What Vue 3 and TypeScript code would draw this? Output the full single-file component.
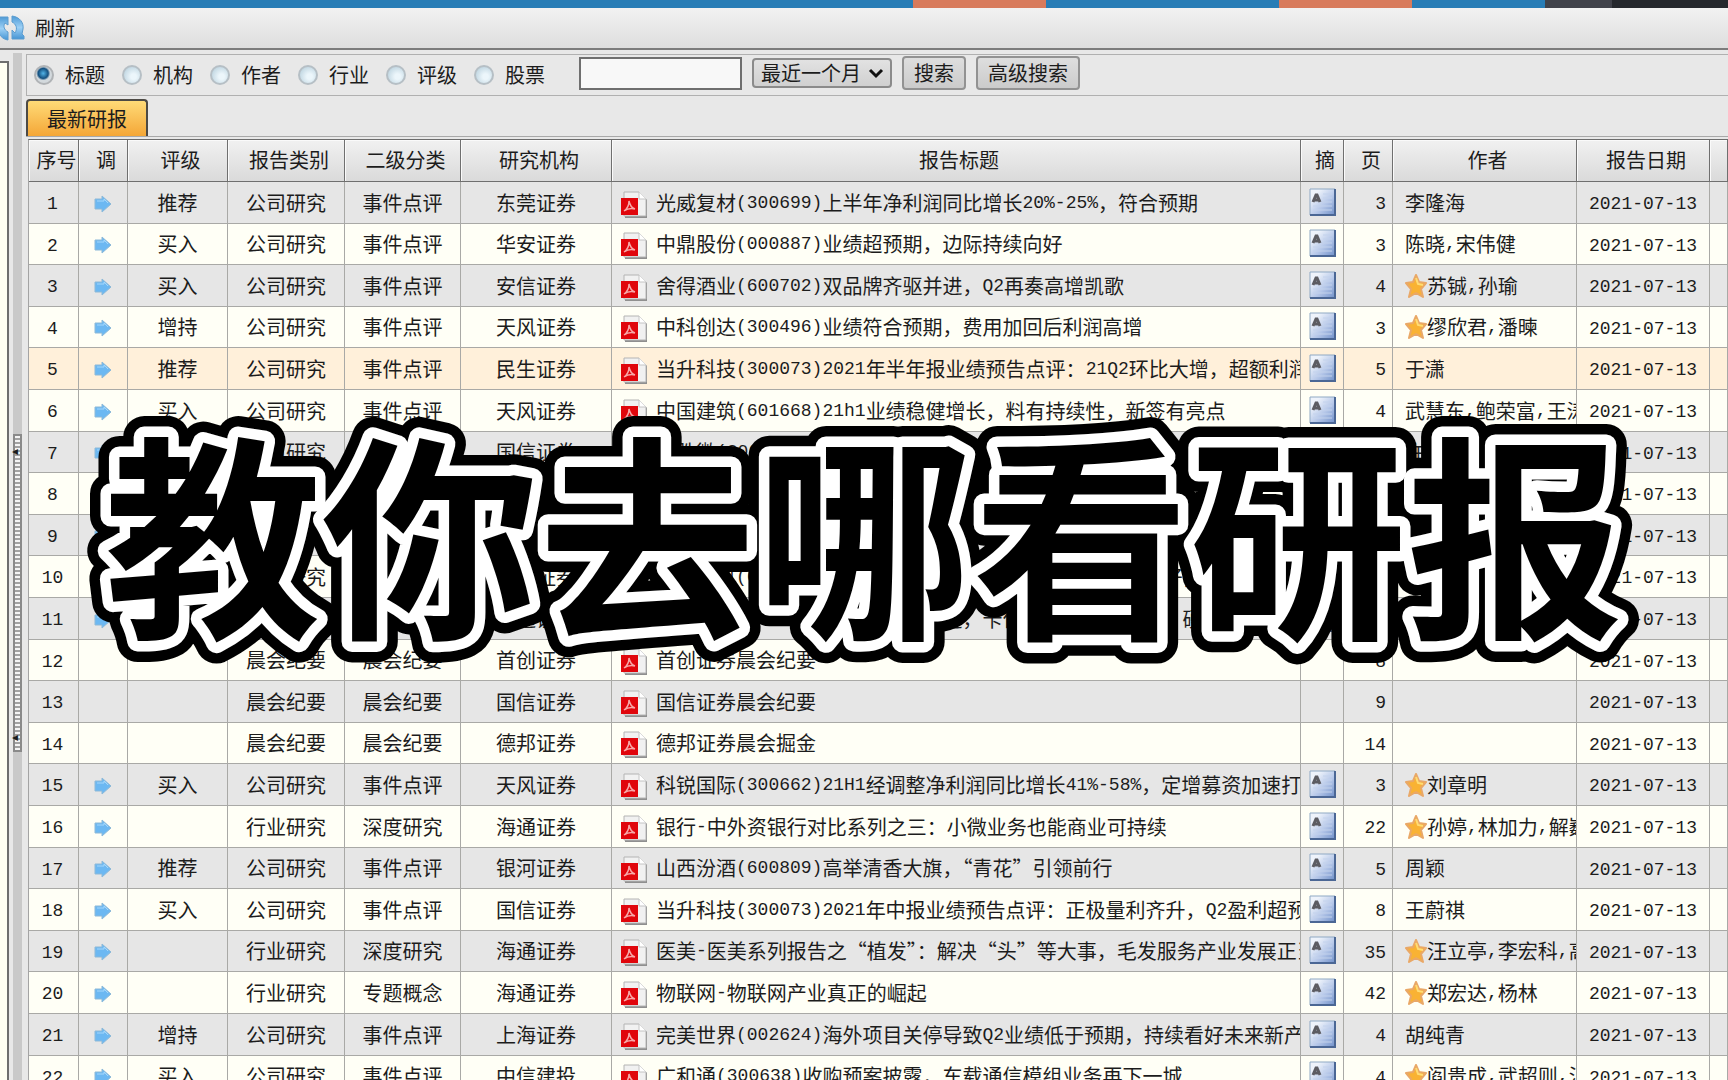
<script setup lang="ts">
import { ref } from 'vue'

interface Report {
  move: boolean
  rating: string
  kind: string
  sub: string
  org: string
  title: string
  brief: boolean
  pages: number
  star: boolean
  authors: string
}

interface Run {
  text: string
  latin: boolean
}

const fields = ['标题', '机构', '作者', '行业', '评级', '股票']
const field = ref('标题')
const keyword = ref('')
const range = ref('最近一个月')
const ranges = ['最近一周', '最近一个月', '最近三个月', '最近一年']
const headline = '教你去哪看研报'

const segments = [
  { color: '#287db6', size: 913 },
  { color: '#d87b5c', size: 133 },
  { color: '#287db6', size: 233 },
  { color: '#d87b5c', size: 133 },
  { color: '#287db6', size: 133 },
  { color: '#40424a', size: 67 },
  { color: '#25282d', size: 116 },
]

const row = (
  move: boolean, rating: string, kind: string, sub: string, org: string,
  title: string, brief: boolean, pages: number, star: boolean, authors: string,
): Report => ({ move, rating, kind, sub, org, title, brief, pages, star, authors })

const reports: Report[] = [
  row(true, '推荐', '公司研究', '事件点评', '东莞证券', '光威复材(300699)上半年净利润同比增长20%-25%，符合预期', true, 3, false, '李隆海'),
  row(true, '买入', '公司研究', '事件点评', '华安证券', '中鼎股份(000887)业绩超预期，边际持续向好', true, 3, false, '陈晓,宋伟健'),
  row(true, '买入', '公司研究', '事件点评', '安信证券', '舍得酒业(600702)双品牌齐驱并进，Q2再奏高增凯歌', true, 4, true, '苏铖,孙瑜'),
  row(true, '增持', '公司研究', '事件点评', '天风证券', '中科创达(300496)业绩符合预期，费用加回后利润高增', true, 3, true, '缪欣君,潘暕'),
  row(true, '推荐', '公司研究', '事件点评', '民生证券', '当升科技(300073)2021年半年报业绩预告点评：21Q2环比大增，超额利润', true, 5, false, '于潇'),
  row(true, '买入', '公司研究', '事件点评', '天风证券', '中国建筑(601668)21h1业绩稳健增长，料有持续性，新签有亮点', true, 4, false, '武慧东,鲍荣富,王涛'),
  row(true, '买入', '公司研究', '事件点评', '国信证券', '卓胜微(300782)业绩超预期', true, 5, false, '许亮'),
  row(true, '买入', '公司研究', '事件点评', '国信证券', '业绩预告点评', true, 4, false, '王平'),
  row(true, '买入', '公司研究', '事件点评', '国信证券', '业绩预告点评', true, 4, false, '王平'),
  row(true, '', '行业研究', '深度研究', '海通证券', '东方电机(600875)业绩高速增长，公司新签订单均持续向好，稳健', true, 6, false, '王平'),
  row(true, '', '行业研究', '深度研究', '海通证券', '中颖电子(300327)国产替代正提速，卡位优势将持续凸显，硬核', true, 9, false, '王平'),
  row(false, '', '晨会纪要', '晨会纪要', '首创证券', '首创证券晨会纪要', false, 8, false, ''),
  row(false, '', '晨会纪要', '晨会纪要', '国信证券', '国信证券晨会纪要', false, 9, false, ''),
  row(false, '', '晨会纪要', '晨会纪要', '德邦证券', '德邦证券晨会掘金', false, 14, false, ''),
  row(true, '买入', '公司研究', '事件点评', '天风证券', '科锐国际(300662)21H1经调整净利润同比增长41%-58%，定增募资加速打造', true, 3, true, '刘章明'),
  row(true, '', '行业研究', '深度研究', '海通证券', '银行-中外资银行对比系列之三：小微业务也能商业可持续', true, 22, true, '孙婷,林加力,解巍巍'),
  row(true, '推荐', '公司研究', '事件点评', '银河证券', '山西汾酒(600809)高举清香大旗，“青花”引领前行', true, 5, false, '周颖'),
  row(true, '买入', '公司研究', '事件点评', '国信证券', '当升科技(300073)2021年中报业绩预告点评：正极量利齐升，Q2盈利超预期', true, 8, false, '王蔚祺'),
  row(true, '', '行业研究', '深度研究', '海通证券', '医美-医美系列报告之“植发”：解决“头”等大事，毛发服务产业发展正当时', true, 35, true, '汪立亭,李宏科,高瑜'),
  row(true, '', '行业研究', '专题概念', '海通证券', '物联网-物联网产业真正的崛起', true, 42, true, '郑宏达,杨林'),
  row(true, '增持', '公司研究', '事件点评', '上海证券', '完美世界(002624)海外项目关停导致Q2业绩低于预期，持续看好未来新产品', true, 4, false, '胡纯青'),
  row(true, '买入', '公司研究', '事件点评', '中信建投', '广和通(300638)收购预案披露，车载通信模组业务再下一城', true, 4, true, '阎贵成,武超则,汪洁'),
]

const selected = 4
const date = '2021-07-13'

// Half-width characters are set in the monospaced face, the rest in the CJK face.
function runs(text: string): Run[] {
  return (text.match(/[\x21-\x7e]+|[^\x21-\x7e]+/g) ?? []).map((part) => ({
    text: part,
    latin: /^[\x21-\x7e]/.test(part),
  }))
}
</script>

<template>
  <div class="app" lang="zh-CN">
    <div class="strip">
      <i v-for="(s, i) in segments" :key="i" :style="{ flexGrow: s.size, background: s.color }"></i>
    </div>

    <header class="toolbar">
      <button type="button" class="refresh">
        <svg width="26" height="28" viewBox="0 0 26 28" aria-hidden="true">
          <defs>
            <linearGradient id="blue" x1="0" y1="0" x2="0" y2="1">
              <stop offset="0" stop-color="#4f9bd6" />
              <stop offset="0.5" stop-color="#9dd0f5" />
              <stop offset="1" stop-color="#4595d4" />
            </linearGradient>
          </defs>
          <path d="M-1 3h9v8L5 9c-2 3-1 7 3 9v8C2 25-1 21-2 16z" fill="url(#blue)" stroke="#5a9cd0" />
          <path d="M12 2c8 1 12 7 11 13l-1 5 2 2v3H12v-9l3 3c3-5 1-9-3-11z" fill="url(#blue)" stroke="#5a9cd0" />
        </svg>
        <span>刷新</span>
      </button>
    </header>

    <div class="body">
      <aside class="side"></aside>
      <div class="splitter">
        <div class="handle"><span>◂</span><span>◂</span></div>
      </div>

      <main class="main">
        <form class="filter" @submit.prevent>
          <label v-for="f in fields" :key="f" class="choice">
            <input v-model="field" type="radio" name="field" :value="f" />
            <span>{{ f }}</span>
          </label>
          <div class="controls">
            <input v-model="keyword" class="keyword" type="text" aria-label="关键词" />
            <span class="range">
              <select v-model="range" aria-label="时间范围">
                <option v-for="r in ranges" :key="r">{{ r }}</option>
              </select>
              <svg width="16" height="12" viewBox="0 0 16 12" aria-hidden="true">
                <path d="M2 2l6 6 6-6" fill="none" stroke="#111" stroke-width="3" />
              </svg>
            </span>
            <button type="submit" class="btn">搜索</button>
            <button type="button" class="btn">高级搜索</button>
          </div>
        </form>

        <nav class="tabs">
          <button type="button" class="tab">最新研报</button>
        </nav>

        <div class="grid">
          <table>
            <colgroup>
              <col class="w-no" /><col class="w-move" /><col class="w-rating" /><col class="w-kind" />
              <col class="w-sub" /><col class="w-org" /><col /><col class="w-brief" />
              <col class="w-pages" /><col class="w-authors" /><col class="w-date" /><col class="w-end" />
            </colgroup>
            <thead>
              <tr>
                <th>序号</th><th>调</th><th>评级</th><th>报告类别</th><th>二级分类</th><th>研究机构</th>
                <th>报告标题</th><th>摘</th><th>页</th><th>作者</th><th>报告日期</th><th></th>
              </tr>
            </thead>
            <tbody>
              <tr v-for="(r, i) in reports" :key="i" :class="{ selected: i === selected }">
                <td class="no"><span class="latin">{{ i + 1 }}</span></td>
                <td>
                  <svg v-if="r.move" class="arrow" width="18" height="18" viewBox="0 0 18 18" aria-hidden="true">
                    <path d="M1 4h7V1l9 8-9 8v-3H1z" fill="#6cb8f2" stroke="#8db9d8" />
                    <path d="M3 6h7V4l4 4" fill="none" stroke="#a5d7fb" />
                  </svg>
                </td>
                <td>{{ r.rating }}</td>
                <td>{{ r.kind }}</td>
                <td>{{ r.sub }}</td>
                <td>{{ r.org }}</td>
                <td class="title">
                  <div class="line">
                    <svg class="pdf" width="27" height="28" viewBox="0 0 27 28" aria-hidden="true">
                      <path d="M4 2h15l7 7v18H4z" fill="#8f8f8f" />
                      <path d="M3 1h15l7 7v17H3z" fill="#f1f1f1" stroke="#b4b4b4" />
                      <path d="M18 1v7h7" fill="#fff" stroke="#c4c4c4" />
                      <path d="M0 7h17v17H0z" fill="#e0060c" />
                      <path d="M3 20c3-2 5-6 5-10 1 5 3 7 6 8-4-1-8 0-11 2z" fill="none" stroke="#f7a9a9" stroke-width="1.5" />
                    </svg>
                    <span v-for="(p, k) in runs(r.title)" :key="k" :class="{ latin: p.latin }">{{ p.text }}</span>
                  </div>
                </td>
                <td>
                  <svg v-if="r.brief" class="brief" width="27" height="28" viewBox="0 0 27 28" aria-hidden="true">
                    <defs>
                      <linearGradient id="page" x1="0" y1="0" x2="1" y2="1">
                        <stop offset="0.2" stop-color="#eef3fb" />
                        <stop offset="0.6" stop-color="#b4c6e8" />
                        <stop offset="1" stop-color="#6f8fc8" />
                      </linearGradient>
                    </defs>
                    <path d="M1 1h25v26H1z" fill="url(#page)" stroke="#8fa9c4" />
                    <path d="M26 1v26H1" fill="none" stroke="#4b6795" stroke-width="2" />
                    <path d="M4 14l3-7h1l3 7M5 12h5" fill="none" stroke="#5c5c62" stroke-width="3" />
                    <path d="M14 6h9M14 10h9M14 14h9M4 18h19M4 22h19" stroke="#c3d2ec" />
                  </svg>
                </td>
                <td class="pages"><span class="latin">{{ r.pages }}</span></td>
                <td class="authors">
                  <div class="line">
                    <svg v-if="r.star" class="star" width="22" height="24" viewBox="0 0 22 24" aria-hidden="true">
                      <path d="M11 1l3 7 7 1-5 6 2 8-7-4-7 4 2-8-5-6 7-1z" fill="#f9b233" stroke="#e9a867" stroke-width="2" stroke-linejoin="round" />
                      <path d="M11 4l2 6 5 1" fill="none" stroke="#ffdc74" stroke-width="2" />
                    </svg>
                    <span v-for="(p, k) in runs(r.authors)" :key="k" :class="{ latin: p.latin }">{{ p.text }}</span>
                  </div>
                </td>
                <td><span class="latin">{{ date }}</span></td>
                <td></td>
              </tr>
            </tbody>
          </table>
        </div>
      </main>
    </div>

    <svg class="headline" viewBox="0 0 1728 300" role="img" :aria-label="headline">
      <defs>
        <text id="headline-text" x="864" y="221" text-anchor="middle">{{ headline }}</text>
      </defs>
      <use href="#headline-text" class="outer" />
      <use href="#headline-text" class="inner" />
      <use href="#headline-text" />
    </svg>
  </div>
</template>

<style>
body {
  margin: 0;
  overflow: hidden;
}
</style>

<style scoped>
.app {
  position: relative;
  display: flex;
  flex-direction: column;
  height: 100vh;
  overflow: hidden;
  background: #e8e8e8;
  color: #1c1c1c;
  font-family: "Noto Sans CJK SC", sans-serif;
  font-size: 20px;
  line-height: 28px;
}
button,
input,
select {
  box-sizing: border-box;
  margin: 0;
  font: inherit;
  color: inherit;
}
.strip {
  display: flex;
  flex: none;
  height: 8px;
}
.toolbar {
  box-sizing: border-box;
  display: flex;
  align-items: center;
  flex: none;
  height: 42px;
  border-bottom: 2px solid #7c7c7c;
  background: linear-gradient(#f2f2f2, #dedede);
}
.refresh {
  display: flex;
  align-items: center;
  gap: 9px;
  padding: 0;
  border: 0;
  background: none;
}
.body {
  display: flex;
  flex: 1;
  min-height: 0;
}
.side {
  box-sizing: border-box;
  width: 9px;
  margin-top: 11px;
  border: solid #6e6e6e;
  border-width: 2px 2px 0 0;
  background: #fffff2;
}
.splitter {
  display: flex;
  align-items: center;
  width: 9px;
  margin: 3px 4px 0;
  background: #c9c9c9;
}
.handle {
  box-sizing: border-box;
  display: flex;
  flex-direction: column;
  justify-content: space-between;
  width: 9px;
  height: 318px;
  margin-top: 52px;
  padding: 4px 0;
  border: 2px solid #8a8a8a;
  background: repeating-linear-gradient(#f4f4f4 0 2px, #a2a2a2 2px 4px);
  font-size: 12px;
  line-height: 20px;
}
.handle span {
  margin-left: -3px;
}
.main {
  display: flex;
  flex-direction: column;
  flex: 1;
  min-width: 0;
}
.filter {
  box-sizing: border-box;
  display: flex;
  align-items: center;
  height: 42px;
  margin-top: 4px;
  padding-left: 7px;
  border: solid #b0b0b0;
  border-width: 1px 0 1px 1px;
}
.choice {
  display: flex;
  align-items: center;
  gap: 11px;
  width: 88px;
}
.choice input {
  appearance: none;
  width: 20px;
  height: 20px;
  border: 2px solid #b6bfc5;
  border-radius: 50%;
  background: radial-gradient(circle at 60% 60%, #ecf6fb 20%, #c3d8e3 75%);
}
.choice input:checked {
  border-color: #b0b3b6;
  background: radial-gradient(circle at 45% 40%, #52b4e8 0, #14507f 5px, #d3d9dd 7px);
}
.controls {
  display: flex;
  align-items: center;
  margin: 0 0 4px 17px;
}
.keyword {
  width: 163px;
  height: 33px;
  border: 2px solid #6f6f6f;
  background: #f8f8f8;
}
.range {
  position: relative;
  margin: 0 10px;
}
.range select {
  appearance: none;
  display: block;
  width: 140px;
  height: 30px;
  padding: 0 7px;
  border: 2px solid #8b8b8b;
  border-radius: 4px;
  background: linear-gradient(#e2e2e2, #d0d0d0);
  line-height: 24px;
}
.range svg {
  position: absolute;
  top: 10px;
  right: 8px;
  pointer-events: none;
}
.btn {
  height: 34px;
  margin-right: 10px;
  padding: 0 10px;
  border: 2px solid #929292;
  border-radius: 4px;
  background: linear-gradient(#dedede, #cbcbcb);
  line-height: 28px;
}
.tabs {
  display: flex;
  margin-top: 3px;
  border-bottom: 1px solid #a8a8a8;
}
.tab {
  width: 122px;
  height: 37px;
  padding: 0;
  border: solid #4d4a45;
  border-width: 2px 2px 0;
  border-radius: 4px 4px 0 0;
  background: linear-gradient(#ffdb77, #f4a637);
}
.grid {
  flex: 1;
  min-height: 0;
  margin: 2px 0 0 2px;
  overflow: hidden;
  border-top: 1px solid #6c6c6c;
  border-left: 1px solid #a4a4a4;
}
table {
  width: 100%;
  border-spacing: 0;
  table-layout: fixed;
}
.w-no { width: 50px; }
.w-move { width: 49px; }
.w-rating { width: 100px; }
.w-kind { width: 117px; }
.w-sub { width: 116px; }
.w-org { width: 151px; }
.w-brief { width: 43px; }
.w-pages { width: 49px; }
.w-authors { width: 184px; }
.w-date { width: 133px; }
.w-end { width: 18px; }
th,
td {
  box-sizing: border-box;
  height: 42px;
  padding: 0;
  overflow: hidden;
  border: solid #a9a9a6;
  border-width: 0 1px 1px 0;
  text-align: center;
  white-space: nowrap;
}
th {
  padding: 0 0 2px 6px;
  border-color: #6f6f6f;
  background: linear-gradient(#f1f1f1, #dadada);
  box-shadow: inset 1px 1px #fafafa;
  font-weight: 400;
}
tbody tr:nth-child(odd) {
  background: #e6e6e6;
}
tbody tr:nth-child(even) {
  background: #fffff6;
}
tbody tr.selected {
  background: #fff0da;
}
tbody tr:nth-child(5n + 2) td,
tbody tr:nth-child(5n + 4) td {
  height: 41px;
}
.latin {
  font-family: "Liberation Mono", monospace;
  font-size: 18px;
}
.line {
  display: flex;
  align-items: center;
  overflow: hidden;
}
td svg {
  display: block;
  flex: none;
  margin: 0 auto;
}
td .arrow {
  margin-top: 2px;
}
td .brief {
  margin-bottom: 2px;
}
td.no {
  padding-right: 2px;
}
td.title {
  padding-left: 9px;
}
td .pdf {
  margin: 4px 8px 0 0;
}
td.pages {
  padding-right: 6px;
  text-align: right;
}
td.authors {
  padding-left: 12px;
}
td .star {
  margin: 0;
}
.headline {
  position: absolute;
  top: 401px;
  left: 0;
  width: 100%;
  overflow: visible;
  pointer-events: none;
  font-size: 217px;
  font-weight: 700;
  fill: #000;
  stroke-linejoin: round;
}
.outer {
  stroke: #000;
  stroke-width: 42px;
}
.inner {
  fill: #fff;
  stroke: #fff;
  stroke-width: 21px;
}
</style>
